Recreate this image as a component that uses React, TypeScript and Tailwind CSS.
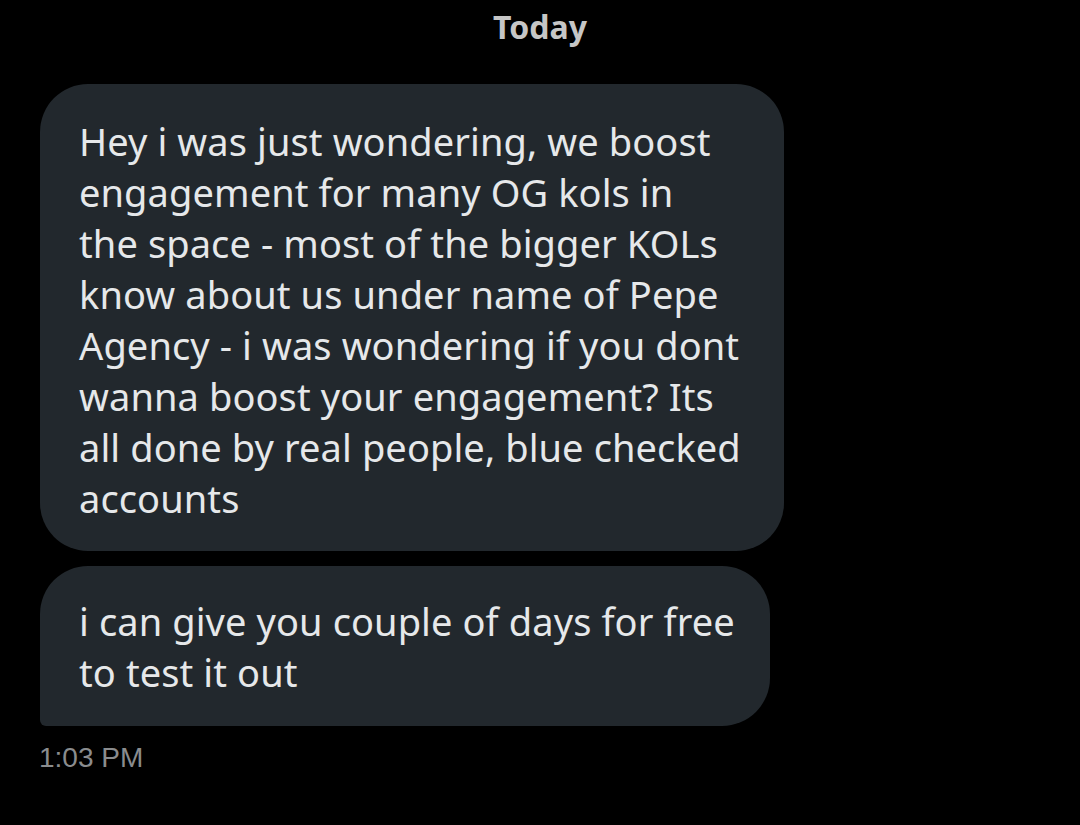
import React from "react";

const first = [
  "Hey i was just wondering, we boost",
  "engagement for many OG kols in",
  "the space - most of the bigger KOLs",
  "know about us under name of Pepe",
  "Agency - i was wondering if you dont",
  "wanna boost your engagement? Its",
  "all done by real people, blue checked",
  "accounts",
];

const second = ["i can give you couple of days for free", "to test it out"];

const App = () => {
  return (
    <div className="w-[1080px] h-[825px] bg-black overflow-hidden">
      {/* date header */}
      <div className="h-[84px] flex justify-center pt-[7px]">
        <span className="text-[32px] leading-[40px] font-bold text-[#c6c6c6] font-['Noto_Sans',sans-serif]">
          Today
        </span>
      </div>

      <div className="pl-[40px] flex flex-col gap-[15px] font-['Noto_Sans',sans-serif] text-[#e6e8ea]">
        {/* message 1 */}
        <div className="w-[744px] bg-[#22282d] rounded-[48px] pl-[39px] pt-[32px] pb-[27px]">
          {first.map((line) => (
            <div key={line} className="text-[38px] leading-[51px] tracking-[0.1px] whitespace-nowrap">
              {line}
            </div>
          ))}
        </div>
        {/* message 2 */}
        <div className="w-[730px] bg-[#22282d] rounded-[48px] rounded-bl-[6px] pl-[39px] pt-[30px] pb-[28px]">
          {second.map((line) => (
            <div key={line} className="text-[38px] leading-[51px] tracking-[0.1px] whitespace-nowrap">
              {line}
            </div>
          ))}
        </div>
      </div>

      <div className="pl-[39px] pt-[15px] text-[28px] leading-[34px] text-[#8a8c8e] font-['Liberation_Sans',sans-serif]">
        1:03 PM
      </div>
    </div>
  );
};

export default App;
